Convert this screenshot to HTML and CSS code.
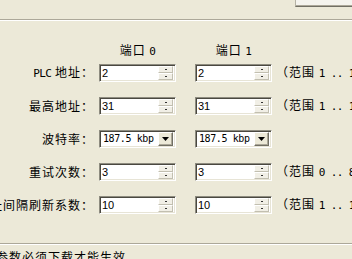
FILE: index.html
```html
<!DOCTYPE html>
<html>
<head>
<meta charset="utf-8">
<link rel="stylesheet" href="styles.css">
</head>
<body>
<div class="page">
  <div class="topbar"><div class="btn">确定</div></div>
  <div class="sep"></div>
  <div class="grid">
    <div></div>
    <div class="head">端口 <span class="lat">0</span></div>
    <div class="head">端口 <span class="lat">1</span></div>
    <div></div>

    <div class="label"><span class="lat">PLC</span> 地址：</div>
    <div class="edit"><span class="val">2</span><div class="spin"><i></i><i></i></div></div>
    <div class="edit"><span class="val">2</span><div class="spin"><i></i><i></i></div></div>
    <div class="range">（范围 <span class="lat">1 .. 126</span>）</div>

    <div class="label">最高地址：</div>
    <div class="edit"><span class="val">31</span><div class="spin"><i></i><i></i></div></div>
    <div class="edit"><span class="val">31</span><div class="spin"><i></i><i></i></div></div>
    <div class="range">（范围 <span class="lat">1 .. 126</span>）</div>

    <div class="label">波特率：</div>
    <div class="edit combo"><span class="cval">187.5 kbp</span><div class="drop"><svg width="7" height="4" viewBox="0 0 7 4"><path d="M0 0h7L3.5 4z" fill="#000"/></svg></div></div>
    <div class="edit combo"><span class="cval">187.5 kbp</span><div class="drop"><svg width="7" height="4" viewBox="0 0 7 4"><path d="M0 0h7L3.5 4z" fill="#000"/></svg></div></div>
    <div></div>

    <div class="label">重试次数：</div>
    <div class="edit"><span class="val">3</span><div class="spin"><i></i><i></i></div></div>
    <div class="edit"><span class="val">3</span><div class="spin"><i></i><i></i></div></div>
    <div class="range">（范围 <span class="lat">0 .. 8</span>）</div>

    <div class="label">地址间隔刷新系数：</div>
    <div class="edit"><span class="val">10</span><div class="spin"><i></i><i></i></div></div>
    <div class="edit"><span class="val">10</span><div class="spin"><i></i><i></i></div></div>
    <div class="range">（范围 <span class="lat">1 .. 100</span>）</div>
  </div>
  <div class="sep bottom"></div>
  <div class="note">参数必须下载才能生效</div>
</div>
</body>
</html>
```

FILE: styles.css
```css
html, body {
  margin: 0;
  padding: 0;
}
body {
  width: 352px;
  height: 259px;
  overflow: hidden;
  background: #ECE9D8;
  color: #000;
  font-family: "Noto Sans CJK SC", sans-serif;
  font-size: 12px;
  line-height: 14px;
}
.page {
  display: flex;
  flex-direction: column;
}
.topbar {
  height: 19px;
  display: flex;
  justify-content: flex-end;
}
.btn {
  width: 62px;
  height: 22px;
  margin-top: -15px;
  margin-right: -5px;
  box-sizing: border-box;
  border-left: 1px solid #B5B2A5;
  border-top: 1px solid #B5B2A5;
  border-right: 1px solid #716F64;
  border-bottom: 1px solid #716F64;
  background: #F5F4EE;
  box-shadow: inset -1px -1px 0 #ACA899;
  font-size: 12px;
  line-height: 14px;
  text-align: center;
  letter-spacing: 1px;
  overflow: hidden;
}
.sep {
  height: 0;
  border-top: 1px solid #ACA899;
  border-bottom: 1px solid #FFFFFF;
}
.grid {
  display: grid;
  grid-template-columns: 99px 96px 89px 1fr;
  align-items: center;
  justify-items: start;
  padding-top: 22px;
  row-gap: 15px;
  white-space: nowrap;
}
.head {
  width: 77px;
  text-align: center;
  letter-spacing: 1px;
  margin-bottom: -8px;
  height: 14px;
}
.label {
  justify-self: end;
  letter-spacing: 1px;
  padding-right: 5px;
}
.lat {
  font-family: "DejaVu Sans Mono", monospace;
  font-size: 11px;
  letter-spacing: -0.6px;
}
.edit {
  width: 77px;
  height: 18px;
  box-sizing: border-box;
  background: #FFFFFF;
  border-top: 1px solid #8E8C80;
  border-left: 1px solid #8E8C80;
  border-right: 1px solid #FFFFFF;
  border-bottom: 1px solid #FFFFFF;
  box-shadow: inset 1px 1px 0 #4A4840, inset -1px -1px 0 #E7E4D6;
  display: flex;
  align-items: center;
}
.val {
  font-family: "Liberation Sans", sans-serif;
  font-size: 11px;
  padding-left: 2px;
  flex: 1;
}
.spin {
  display: flex;
  flex-direction: column;
  width: 15px;
  height: 14px;
  margin-right: 2px;
}
.spin i {
  flex: 1;
  box-sizing: border-box;
  background: #F1EFE6;
  border-top: 1px solid #FFFFFF;
  border-left: 1px solid #FFFFFF;
  border-right: 1px solid #C2BFB0;
  border-bottom: 1px solid #C2BFB0;
  display: flex;
  align-items: center;
  justify-content: center;
}
.spin i::after {
  content: "";
  width: 2px;
  height: 1px;
  background: #333;
}
.cval {
  font-family: "DejaVu Sans Mono", monospace;
  font-size: 10px;
  padding-left: 3px;
  flex: 1;
  letter-spacing: -0.4px;
}
.drop {
  width: 15px;
  height: 14px;
  margin-right: 2px;
  box-sizing: border-box;
  background: #ECE9D8;
  border-top: 1px solid #FFFFFF;
  border-left: 1px solid #FFFFFF;
  border-right: 1px solid #716F64;
  border-bottom: 1px solid #716F64;
  box-shadow: inset -1px -1px 0 #ACA899;
  display: flex;
  align-items: center;
  justify-content: center;
}
.range {
  margin-left: -8px;
  letter-spacing: 1px;
}
.sep.bottom {
  margin-top: 29px;
}
.note {
  margin-top: 5px;
  margin-left: -4px;
  letter-spacing: 1px;
  white-space: nowrap;
}
```
